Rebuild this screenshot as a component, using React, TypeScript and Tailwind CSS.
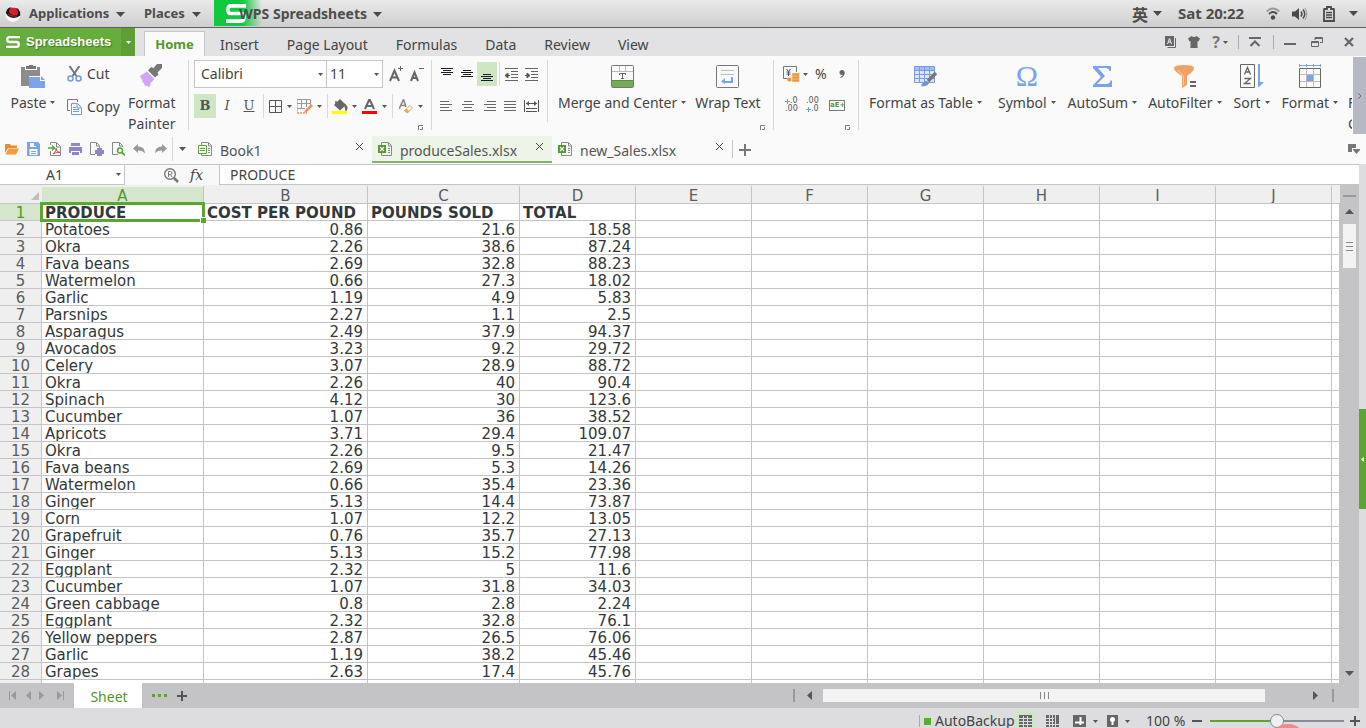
import { useState, type ReactNode } from "react";
import clsx from "clsx";

type Row = [string, string, string, string];

const rows: Row[] = [
  ["Potatoes", "0.86", "21.6", "18.58"],
  ["Okra", "2.26", "38.6", "87.24"],
  ["Fava beans", "2.69", "32.8", "88.23"],
  ["Watermelon", "0.66", "27.3", "18.02"],
  ["Garlic", "1.19", "4.9", "5.83"],
  ["Parsnips", "2.27", "1.1", "2.5"],
  ["Asparagus", "2.49", "37.9", "94.37"],
  ["Avocados", "3.23", "9.2", "29.72"],
  ["Celery", "3.07", "28.9", "88.72"],
  ["Okra", "2.26", "40", "90.4"],
  ["Spinach", "4.12", "30", "123.6"],
  ["Cucumber", "1.07", "36", "38.52"],
  ["Apricots", "3.71", "29.4", "109.07"],
  ["Okra", "2.26", "9.5", "21.47"],
  ["Fava beans", "2.69", "5.3", "14.26"],
  ["Watermelon", "0.66", "35.4", "23.36"],
  ["Ginger", "5.13", "14.4", "73.87"],
  ["Corn", "1.07", "12.2", "13.05"],
  ["Grapefruit", "0.76", "35.7", "27.13"],
  ["Ginger", "5.13", "15.2", "77.98"],
  ["Eggplant", "2.32", "5", "11.6"],
  ["Cucumber", "1.07", "31.8", "34.03"],
  ["Green cabbage", "0.8", "2.8", "2.24"],
  ["Eggplant", "2.32", "32.8", "76.1"],
  ["Yellow peppers", "2.87", "26.5", "76.06"],
  ["Garlic", "1.19", "38.2", "45.46"],
  ["Grapes", "2.63", "17.4", "45.76"],
];

const headings = ["PRODUCE", "COST PER POUND", "POUNDS SOLD", "TOTAL"];
const columns = ["A", "B", "C", "D", "E", "F", "G", "H", "I", "J"];
const colWidths = ["w-[162px]", "w-[164px]", "w-[152px]", "w-[116px]", "w-[116px]", "w-[116px]", "w-[116px]", "w-[116px]", "w-[116px]", "w-[116px]"];
const emptyCols = ["E", "F", "G", "H", "I", "J", "rest"];
const menuTabs = ["Insert", "Page Layout", "Formulas", "Data", "Review", "View"];

/* ---------- small drawing helpers ---------- */

function Svg({ w, h, children, className }: { w: number; h: number; children: ReactNode; className?: string }) {
  return (
    <svg width={w} height={h} viewBox={`0 0 ${w} ${h}`} fill="none" className={clsx("block shrink-0", className)} aria-hidden="true">
      {children}
    </svg>
  );
}

function Caret({ className }: { className?: string }) {
  return (
    <Svg w={5} h={3} className={className}>
      <path d="M0 0h5L2.5 3z" fill="#555" />
    </Svg>
  );
}

function BigCaret() {
  return (
    <Svg w={9} h={5}>
      <path d="M0 0h9L4.5 5z" fill="#4a4a4a" />
    </Svg>
  );
}

function Launcher() {
  return (
    <button aria-label="More options" className="absolute right-2 bottom-1">
      <Svg w={5} h={5}>
        <path d="M.5 5V.5H5M2 4.5h2.5V2" stroke="#777" />
      </Svg>
    </button>
  );
}

function Divider({ className, color = "bg-[#d9d9da]" }: { className?: string; color?: string }) {
  return <div className={clsx("w-px shrink-0", color, className)} />;
}

function WpsLogo({ w, h }: { w: number; h: number }) {
  return (
    <svg width={w} height={h} viewBox="0 0 20 18" preserveAspectRatio="none" fill="none" className="block shrink-0" aria-hidden="true">
      <path d="M20 1.8H5Q1.8 1.8 1.8 5.4Q1.8 9 5 9H15Q18.2 9 18.2 12.6Q18.2 16.2 15 16.2H0" stroke="#fff" strokeWidth="3.4" />
    </svg>
  );
}

// horizontal line stack used by the alignment icons: [x, y, width]
function Lines({ items, color = "#666", w = 14, h = 12, children }: { items: number[][]; color?: string; w?: number; h?: number; children?: ReactNode }) {
  return (
    <Svg w={w} h={h}>
      {items.map(([x, y, len]) => (
        <rect key={`${x}-${y}`} x={x} y={y} width={len} height={1} fill={color} />
      ))}
      {children}
    </Svg>
  );
}

/* ---------- desktop bar ---------- */

function DesktopBar() {
  return (
    <header className="flex h-7 items-center border-b border-[#606062] bg-gradient-to-b from-[#eaeaea] to-[#cecece] text-[13px] font-bold text-[#4d4d4d]">
      <Svg w={16} h={16} className="ml-[5px]">
        <circle cx="8" cy="8" r="7.5" fill="#fff" />
        <path d="M1 8.5C3 12 10 12.500 14.500 9.500C14 13 11 15.500 8 15.500C4 15.500 1 12 1 8.500z" fill="#fff" />
        <path d="M.8 7C1.500 4 3 2 4.500 1.500L13 2.500Q15.500 5 15.300 9.500Q11 13 6 11.500Q2 10 .8 7z" fill="#161616" />
        <path d="M4 5.500Q4.500 1.500 6.300 1.500Q8 2.200 9.300 1.500Q12.500 1.500 13.300 7.800Q12 10 8.500 9Q4.500 8 4 5.500z" fill="#d4202a" />
        <path d="M2.500 6.500Q5 10.300 13.500 9.700Q8 12 3.500 9z" fill="#d4202a" />
      </Svg>
      <button className="ml-2 flex w-24 items-center justify-between pt-px">Applications <BigCaret /></button>
      <button className="ml-[19px] flex w-[57px] items-center justify-between pt-px">Places <BigCaret /></button>
      <button className="relative ml-[13px] flex h-full w-[168px] items-center justify-end gap-[6px] pt-px">
        <span className="absolute top-0 left-0 h-[26px] w-12 bg-gradient-to-r from-[#12c83e] from-60% to-transparent pt-1 pl-3">
          <WpsLogo w={20} h={19} />
        </span>
        <span className="relative text-sm">WPS Spreadsheets</span>
        <BigCaret />
      </button>
      <div className="ml-auto flex items-center pr-2">
        <button className="flex items-center gap-[5px] font-['Noto_Sans_CJK_SC',sans-serif] text-[16px] leading-5">英 <BigCaret /></button>
        <span className="ml-4 w-[74px] text-[15px]">Sat 20:22</span>
        <Svg w={14} h={13} className="ml-[14px]">
          <path d="M.8 4.500Q7-1.500 13.200 4.500" stroke="#9a9a9a" strokeWidth="1.800" />
          <path d="M3 7Q7 3 11 7" stroke="#4a4a4a" strokeWidth="1.800" />
          <circle cx="7" cy="10.500" r="2.200" fill="#4a4a4a" />
        </Svg>
        <Svg w={16} h={14} className="ml-3">
          <path d="M0 4.500h3L7 1v12L3 9.500H0z" fill="#4a4a4a" />
          <path d="M9 4.500q1.800 2.500 0 5M11 2.500q3.500 4.500 0 9" stroke="#4a4a4a" strokeWidth="1.500" />
          <path d="M13 1q3.500 6 0 12" stroke="#aaa" strokeWidth="1.300" />
        </Svg>
        <Svg w={12} h={16} className="ml-[15px]">
          <path d="M4 1h4v2h2.500q.5 0 .5.500v11.500H1V3.500Q1 3 1.500 3H4z" stroke="#4a4a4a" strokeWidth="1.800" />
          <path d="M3 6.500h6M3 9h6M3 11.500h6" stroke="#4a4a4a" strokeWidth="1.400" />
        </Svg>
        <span className="ml-[14px]"><BigCaret /></span>
      </div>
    </header>
  );
}

/* ---------- menu tabs ---------- */

function MenuBar() {
  return (
    <nav className="flex h-7 items-end bg-[#e2e2e4] text-sm text-[#444]">
      <button className="flex h-7 w-[121px] items-center gap-[6px] bg-[#66ad3d] pl-[6px] font-['Liberation_Sans',sans-serif] text-[13px] font-bold text-white [text-shadow:1px_1px_1px_#3c7a1c]">
        <WpsLogo w={14} h={12} />
        Spreadsheets
      </button>
      <button aria-label="Application menu" className="flex h-7 w-[14px] items-center justify-center bg-[#5d9f36]">
        <Svg w={5} h={3}><path d="M0 0h5L2.500 3z" fill="#fff" /></Svg>
      </button>
      <button className="mr-px ml-[9px] h-[25px] w-[61px] border border-b-0 border-[#c6c6c8] bg-[#fafafa] text-[13px] font-bold text-[#4f9a2a]">Home</button>
      {menuTabs.map((tab) => (
        <button key={tab} className="h-[23px] px-[14px] leading-[23px]">{tab}</button>
      ))}
      <div className="ml-auto flex h-7 items-center pr-3">
        <button aria-label="Skin letter" className="mr-3">
          <Svg w={11} h={12}>
            <path d="M2.500 11.500h8V2" stroke="#666" />
            <path d="M0 0h9v10H0z" fill="#666" />
            <path d="M2.500 8 4.500 2.500 6.500 8M3.200 6h2.600" stroke="#eee" />
          </Svg>
        </button>
        <button aria-label="Theme">
          <Svg w={12} h={12}><path d="M3.500 0Q6 2 8.500 0L12 2.500 10.500 5.500 9.500 5v7H2.500V5L1.500 5.500 0 2.500z" fill="#666" /></Svg>
        </button>
        <button aria-label="Help" className="ml-3 flex items-center gap-[3px] text-[16px] leading-5 font-bold text-[#777]">? <Caret /></button>
        <Divider className="ml-[10px] h-[14px]" color="bg-[#aaa]" />
        <button aria-label="Collapse ribbon" className="ml-[10px]">
          <Svg w={12} h={10}><path d="M0 1h12M1.500 9 6 4.500 10.500 9" stroke="#666" strokeWidth="2" /></Svg>
        </button>
        <Divider className="ml-3 h-[14px]" color="bg-[#aaa]" />
        <button aria-label="Minimize" className="ml-[10px]"><Svg w={12} h={10}><path d="M0 7h12" stroke="#666" strokeWidth="2" /></Svg></button>
        <button aria-label="Restore" className="ml-[15px]">
          <Svg w={12} h={10}><path d="M.5 4.500h7v5h-7zM.5 5.500h7M4 3V.500h7.500v5H9M4 1.500h7" stroke="#666" /></Svg>
        </button>
        <button aria-label="Close" className="ml-[21px]"><Svg w={10} h={10}><path d="m1 1 8 8M9 1 1 9" stroke="#666" strokeWidth="2.200" /></Svg></button>
      </div>
    </nav>
  );
}

/* ---------- ribbon ---------- */

function BigButton({ icon, label, caret, className }: { icon: ReactNode; label: ReactNode; caret?: boolean; className?: string }) {
  return (
    <button className={clsx("flex shrink-0 flex-col items-center gap-1 self-start pt-2 leading-[21px] whitespace-nowrap", className)}>
      <span className="flex h-6 items-center">{icon}</span>
      <span className="flex items-center gap-1">{label}{caret && <Caret />}</span>
    </button>
  );
}

function ClipboardGroup() {
  return (
    <div className="flex w-[188px] shrink-0 pl-[10px]">
      <BigButton
        caret
        label="Paste"
        className="w-[46px]"
        icon={
          <Svg w={24} h={23}>
            <path d="M0 2h4v3h12V2h3v9H8v10H0z" fill="#8c8c8c" />
            <path d="M5 1h3V0h4v1h3v3H5z" fill="#777" />
            <path d="M8 12h11v4h5v7H8z" fill="#7ba3ec" />
            <path d="M20 11l4 4h-4z" fill="#7ba3ec" />
          </Svg>
        }
      />
      <div className="ml-[11px] flex w-[56px] flex-col pt-2">
        <button className="flex h-5 items-center gap-[5px]">
          <Svg w={15} h={16}>
            <path d="M2.500 0 9.500 10M12.500 0 5.500 10" stroke="#777" strokeWidth="2" />
            <circle cx="3.500" cy="12.500" r="2.500" stroke="#6f9be8" strokeWidth="1.500" />
            <circle cx="11.500" cy="12.500" r="2.500" stroke="#6f9be8" strokeWidth="1.500" />
          </Svg>
          Cut
        </button>
        <button className="mt-[13px] flex h-5 items-center gap-[5px]">
          <Svg w={15} h={16}>
            <path d="M3 11.500H.5V.500h10V3" stroke="#777" />
            <path d="M4.500 4.500h6l4 4v7h-10z" stroke="#6f9be8" />
            <path d="M10 5v4h4M6 8.500h3M6 10.500h6M6 12.500h6" stroke="#6f9be8" />
          </Svg>
          Copy
        </button>
      </div>
      <BigButton
        label={<span className="text-center">Format<br />Painter</span>}
        className="ml-[5px]"
        icon={
          <Svg w={24} h={24}>
            <path d="M17 0h5v4l-4.500 4.500 1 2-3.500 3L8 6.500l3-3.500 2.500 1z" fill="#777" />
            <path d="M7 7.500 14.500 15 9 21 5.500 22.500 0 12z" fill="#cfa8f5" />
            <path d="M3 16l7 6" stroke="#cfa8f5" strokeWidth="3" />
          </Svg>
        }
      />
    </div>
  );
}

function FontGroup() {
  const [font, setFont] = useState("Calibri");
  const [size, setSize] = useState("11");
  return (
    <div className="relative w-[242px] shrink-0 pt-1 pl-[5px]">
      <div className="flex items-center">
        <label className="relative">
          <span className="sr-only">Font</span>
          <select value={font} onChange={(e) => setFont(e.target.value)} className="block h-7 w-[133px] appearance-none border border-[#c6c6c8] bg-white pl-[6px] leading-5">
            <option>Calibri</option>
            <option>Arial</option>
          </select>
          <Caret className="pointer-events-none absolute top-[13px] right-1" />
        </label>
        <label className="relative">
          <span className="sr-only">Font size</span>
          <select value={size} onChange={(e) => setSize(e.target.value)} className="block h-7 w-14 appearance-none border border-l-0 border-[#c6c6c8] bg-white pl-[3px] leading-5">
            <option>11</option>
            <option>12</option>
          </select>
          <Caret className="pointer-events-none absolute top-[13px] right-1" />
        </label>
        <button aria-label="Increase font size" className="ml-[6px]">
          <Svg w={14} h={16}>
            <path d="M1 15 5.500 4.500 10 15M2.500 11.500h6" stroke="#666" strokeWidth="2" />
            <path d="M9 2.500h5M11.500 0v5" stroke="#666" />
          </Svg>
        </button>
        <button aria-label="Decrease font size" className="ml-[7px]">
          <Svg w={14} h={16}>
            <path d="M1 15 4.500 6.500 8 15M2 12h5" stroke="#666" strokeWidth="2" />
            <path d="M9 2.500h5" stroke="#666" />
          </Svg>
        </button>
      </div>
      <div className="mt-[6px] flex h-6 items-center">
        <button className="h-6 w-[22px] bg-[#cee6c4] font-['DejaVu_Serif',serif] text-[13px] font-bold text-[#555]">B</button>
        <button className="h-6 w-[22px] font-['DejaVu_Serif',serif] text-[13px] text-[#555] italic">I</button>
        <button className="h-6 w-[22px] font-['DejaVu_Serif',serif] text-[13px] text-[#555] underline">U</button>
        <Divider className="ml-[3px] h-6" />
        <button aria-label="Borders" className="ml-[5px] flex items-center gap-[5px]">
          <Svg w={13} h={13}><path d="M.5.500h12v12H.500zM.5 6.500h12M6.500.500v12" stroke="#555" /></Svg>
          <Caret />
        </button>
        <button aria-label="Draw border" className="ml-[5px] flex items-center gap-1">
          <Svg w={16} h={15}>
            <path d="M0 14V.500h13.500V7M0 4.500h13M0 9.500h8M4.500 0v10M9.500 0v8" stroke="#999" />
            <path d="M15 6 8 13" stroke="#f0935a" strokeWidth="2.500" />
            <path d="M0 14h10" stroke="#f0935a" strokeWidth="1.500" strokeDasharray="2 1" />
          </Svg>
          <Caret />
        </button>
        <Divider className="ml-[5px] h-6" />
        <button aria-label="Fill color" className="ml-1 flex items-center gap-1">
          <Svg w={16} h={15}>
            <path d="M8 0 14 6 8 11.500 2 6z" fill="#666" />
            <path d="M4 2v4M13 6q3 2 1 5z" stroke="#666" strokeWidth="1.500" />
            <path d="M0 12h15v3H0z" fill="#ffff00" />
          </Svg>
          <Caret />
        </button>
        <button aria-label="Font color" className="ml-[5px] flex items-center gap-[5px]">
          <Svg w={15} h={15}>
            <path d="M3 10 7.500 0 12 10M4.500 7h6" stroke="#666" strokeWidth="2" />
            <path d="M0 12h15v3H0z" fill="#f00" />
          </Svg>
          <Caret />
        </button>
        <Divider className="ml-[5px] h-6" />
        <button aria-label="Clear format" className="ml-[6px] flex items-center gap-[5px]">
          <Svg w={14} h={15}>
            <path d="M0 10 4.500.500 7 8M2 6.500h4" stroke="#888" strokeWidth="1.600" />
            <path d="M11 6.500 13.500 9 8 14 5.500 11.500z" stroke="#eda45c" />
            <path d="m7.500 9.500 3 3L8 14.500 5.500 12z" fill="#eda45c" />
          </Svg>
          <Caret />
        </button>
      </div>
      <Launcher />
    </div>
  );
}

function AlignGroup() {
  const dark = "#1c1c28";
  return (
    <div className="relative flex w-[341px] shrink-0">
      <div className="w-[115px] pt-[6px] pl-[5px]">
        <div className="flex h-6 items-center">
          <button aria-label="Align top" className="flex h-6 w-5 items-start justify-center pt-[6px]">
            <Lines color={dark} h={9} w={12} items={[[0, 0, 12], [2, 2, 8], [0, 4, 12], [2, 6, 8]]} />
          </button>
          <button aria-label="Align middle" className="flex h-6 w-5 items-center justify-center">
            <Lines color={dark} h={8} w={12} items={[[2, 0, 8], [0, 2, 12], [2, 4, 8], [0, 6, 12]]} />
          </button>
          <button aria-label="Align bottom" className="flex h-6 w-5 items-end justify-center bg-[#cee6c4] pb-1">
            <Lines color={dark} h={8} w={12} items={[[2, 0, 8], [0, 2, 12], [2, 4, 8], [0, 6, 12]]} />
          </button>
          <Divider className="ml-[2px] h-6" />
          <button aria-label="Decrease indent" className="ml-[5px]">
            <Lines w={13} h={13} items={[[0, 0, 13], [6, 3, 7], [6, 6, 7], [6, 9, 7], [0, 12, 13]]}>
              <path d="M0 7.500 3 5v5zM2 7.500h3" fill="#555" stroke="#555" />
            </Lines>
          </button>
          <button aria-label="Increase indent" className="ml-[7px]">
            <Lines w={13} h={13} items={[[0, 0, 13], [6, 3, 7], [6, 6, 7], [6, 9, 7], [0, 12, 13]]}>
              <path d="M5 7.500 2 5v5zM0 7.500h3" fill="#555" stroke="#555" />
            </Lines>
          </button>
        </div>
        <div className="mt-2 flex h-6 items-center gap-2 pl-[3px]">
          <button aria-label="Align left"><Lines w={12} h={11} items={[[0, 0, 9], [0, 3, 12], [0, 6, 9], [0, 9, 12]]} /></button>
          <button aria-label="Center" className="ml-[2px]"><Lines w={12} h={11} items={[[2, 0, 8], [0, 3, 12], [2, 6, 8], [0, 9, 12]]} /></button>
          <button aria-label="Align right" className="ml-[2px]"><Lines w={12} h={11} items={[[3, 0, 9], [0, 3, 12], [3, 6, 9], [0, 9, 12]]} /></button>
          <button aria-label="Justify"><Lines w={12} h={11} items={[[0, 0, 12], [0, 3, 12], [0, 6, 12], [0, 9, 12]]} /></button>
          <button aria-label="Distribute">
            <Svg w={15} h={12}>
              <path d="M.5 0v12M14.500 0v12M2 8.500h11M2 11.500h11M2 3.500h11" stroke="#555" />
              <path d="M2 3.500 5 1v5zM13 3.500 10 1v5z" fill="#555" />
            </Svg>
          </button>
        </div>
      </div>
      <Divider className="mt-1 h-[62px]" />
      <BigButton
        caret
        label="Merge and Center"
        className="ml-[10px]"
        icon={
          <Svg w={23} h={23}>
            <path d="M1 15h21v7H1z" fill="#75ad57" />
            <rect x=".5" y=".5" width="22" height="22" rx="1" stroke="#777" />
            <path d="M1 6.500h21M8.500 1v5M14.500 1v5" stroke="#bbb" />
            <path d="M0 15.500h23" stroke="#5a8f3d" />
            <path d="M8.500 10V8.500h6V10M11.500 8.500v5M10 13.500h3" stroke="#666" />
          </Svg>
        }
      />
      <BigButton
        label="Wrap Text"
        className="ml-[9px]"
        icon={
          <Svg w={23} h={23}>
            <rect x=".5" y=".5" width="22" height="22" rx="1" stroke="#777" />
            <path d="M5 5.500h13M5 9.500h13" stroke="#bbb" />
            <path d="M16 12v5H8" stroke="#7ba3ec" strokeWidth="2" />
            <path d="M5 16.500 9 13v6z" fill="#7ba3ec" />
          </Svg>
        }
      />
      <Launcher />
    </div>
  );
}

function NumberGroup() {
  return (
    <div className="relative w-[84px] shrink-0 pt-2 pl-[9px]">
      <div className="flex h-5 items-center">
        <button aria-label="Currency" className="flex items-center gap-[3px]">
          <Svg w={17} h={16}>
            <path d="M13.500 6V.500H.500v12H4" stroke="#777" />
            <path d="M3.500 3 5.500 5.500 7.500 3M5.500 5.500V10M3.500 6h4M3.500 8h4" stroke="#555" />
            <path d="M4 12h4v3H5zM9.500 7.500h6.500v2H9.500zM9.500 10.500h6.500v2H9.500zM9.500 13.500h6.500v2H9.500z" fill="#f09436" stroke="#f09436" strokeLinejoin="round" strokeWidth=".6" />
          </Svg>
          <Caret />
        </button>
        <button className="ml-[7px] text-sm leading-5">%</button>
        <button aria-label="Comma style" className="ml-3">
          <Svg w={6} h={8}><circle cx="3" cy="2.500" r="2.500" fill="#666" /><path d="M5 2.500Q5 6 1.500 7.500" stroke="#666" strokeWidth="1.300" /></Svg>
        </button>
      </div>
      <div className="mt-3 flex h-[18px] items-center pl-[2px] font-['DejaVu_Sans',sans-serif] text-[8px] leading-2 text-[#555]">
        <button aria-label="Increase decimal" className="w-[21px]">
          <span className="flex items-center justify-between pr-[10px]">
            <Svg w={5} h={5}><path d="M0 2.500h5M2.500 0v5" stroke="#6f9be8" /></Svg>.0
          </span>
          <span className="block text-left">.00</span>
        </button>
        <button aria-label="Decrease decimal" className="w-[23px]">
          <span className="block text-left">.00</span>
          <span className="flex items-center justify-between pr-3">
            <Svg w={5} h={5}><path d="M0 2.500h5M2.500 0v5" stroke="#6f9be8" /></Svg>.0
          </span>
        </button>
        <button className="h-[11px] w-4 border border-[#777] text-center text-[7px] leading-2 font-bold text-[#5a9a35]">aE+</button>
      </div>
      <Launcher />
    </div>
  );
}

function CellsGroup() {
  return (
    <div className="flex min-w-0 flex-1 overflow-hidden pl-[10px]">
      <BigButton
        caret
        label="Format as Table"
        icon={
          <Svg w={23} h={22}>
            <path d="M1 2h19v16H1z" fill="#dbe6fa" />
            <path d="M1 2h19v4H1z" fill="#a5bff0" />
            <path d="M.5 1.500h20v16H.500zM1 5.500h19M1 9.500h19M1 13.500h19M5.500 2v15M10.500 2v15M15.500 2v15" stroke="#7b9be0" />
            <path d="M22 8 14 16" stroke="#777" strokeWidth="3.500" />
            <path d="M7 21q2-5 6-5l2 2q-2 4-8 3z" fill="#6f93dc" />
          </Svg>
        }
      />
      <BigButton
        caret
        label="Symbol"
        className="ml-4"
        icon={<span className="font-['Liberation_Serif',serif] text-[30px] leading-6 text-[#7ba3ec]">Ω</span>}
      />
      <BigButton
        caret
        label="AutoSum"
        className="ml-3"
        icon={<Svg w={19} h={21}><path d="M0 0h18v5h-1.500Q16 2 12 2H5l7 8-8 8h9Q17 18 17.500 14.500H19V21H0v-2l8-8L0 2z" fill="#7ba3ec" /></Svg>}
      />
      <BigButton
        caret
        label="AutoFilter"
        className="ml-[11px]"
        icon={
          <Svg w={22} h={23}>
            <path d="M0 3Q0 0 10 0T20 3Q20 6 13 11v9l-5 3V11Q0 6 0 3z" fill="#f2a063" />
            <path d="M4 5q4 5 5.500 6v9" stroke="#fbd5b6" />
            <path d="M16 17h6M16 21h6" stroke="#666" strokeWidth="2" />
          </Svg>
        }
      />
      <BigButton
        caret
        label="Sort"
        className="ml-3"
        icon={
          <Svg w={24} h={24}>
            <path d="M.5.500h14v23H.500z" stroke="#666" />
            <path d="M4.500 10.500 7.500 3.500l3 7M5.500 8h4M4.500 14.500h6l-6 5h6" stroke="#666" strokeWidth="1.300" />
            <path d="M18 0h2v18h4l-5 5h-1z" fill="#7ba3ec" />
          </Svg>
        }
      />
      <BigButton
        caret
        label="Format"
        className="ml-3"
        icon={
          <Svg w={22} h={24}>
            <path d="M0 1.500h22M.5 0v3M7.500 0v3M14.500 0v3M21.500 0v3" stroke="#7ba3ec" />
            <path d="M7 10h8v7H7z" fill="#7ba3ec" />
            <path d="M1 10.500h20M1 17.500h20M7.500 4v20M14.500 4v20" stroke="#bbb" />
            <path d="M.5 4.500h21v19H.500z" stroke="#666" />
          </Svg>
        }
      />
      {/* next group is cut off by the scroll handle */}
      <button className="ml-[10px] w-1 shrink-0 self-start overflow-hidden pt-9 text-left leading-[21px]">F<br />C</button>
    </div>
  );
}

function Ribbon() {
  return (
    <section className="flex h-[78px] bg-[#fafafa] text-sm text-[#444]">
      <ClipboardGroup />
      <Divider className="my-1" />
      <FontGroup />
      <Divider className="my-1" />
      <AlignGroup />
      <Divider className="my-1" />
      <NumberGroup />
      <Divider className="my-1" />
      <CellsGroup />
      <button aria-label="Scroll ribbon" className="mt-px flex w-[13px] shrink-0 items-center justify-center bg-[#b6b9c3]">
        <Svg w={4} h={6}><path d="m.5.500 2.500 2.500L.500 5.500" stroke="#666" /></Svg>
      </button>
    </section>
  );
}

/* ---------- quick access + document tabs ---------- */

function SheetIcon({ excel }: { excel?: boolean }) {
  return (
    <Svg w={14} h={14}>
      <path d="M3.500 3V.500h7l3 3v10h-10V11M10.500 1v3h3M10 6.500h2M10 8.500h2M10 10.500h2" stroke="#888" />
      {excel ? (
        <>
          <path d="M0 3h8v8H0z" fill="#4f9a2a" />
          <path d="m2 5 4 4M6 5 2 9" stroke="#fff" strokeWidth="1.200" />
        </>
      ) : (
        <path d="M.5 3.500h8v8h-8zM2 6.500h5M2 8.500h5" stroke="#5aa635" fill="#fff" />
      )}
    </Svg>
  );
}

function DocTab({ name, active, excel }: { name: string; active?: boolean; excel?: boolean }) {
  return (
    <div className={clsx("mb-px flex h-[27px] w-[180px] shrink-0 items-center self-end border-b-2 pr-2 pl-[6px]", active ? "border-[#86b06c] bg-[#ecf5e8]" : "border-transparent")}>
      <button className="flex items-center gap-2">
        <SheetIcon excel={excel} />
        <span className="pt-1">{name}</span>
      </button>
      <button aria-label={`Close ${name}`} className="mb-1 ml-auto">
        <Svg w={9} h={9}><path d="m1 1 7 7M8 1 1 8" stroke="#444" /></Svg>
      </button>
    </div>
  );
}

function DocBar() {
  return (
    <section className="flex h-[30px] items-center bg-[#fafafa] text-sm text-[#555]">
      <div className="flex w-[172px] shrink-0 items-center gap-2 pl-[5px]">
        <button aria-label="Open">
          <Svg w={14} h={12}>
            <path d="M0 10V1h5l1 1.500h6V5H3z" fill="#ef8a2c" />
            <path d="M3.500 5.500H14L11 11.500H.500z" fill="#f79a3c" />
          </Svg>
        </button>
        <button aria-label="Save">
          <Svg w={13} h={14}>
            <path d="M0 0h11l2 2v12H0z" fill="#7ba3ec" />
            <path d="M3 1h6v4H3zM2.500 7h8v6h-8z" fill="#fafafa" />
            <path d="M7 1h2v3H7zM4 9h5v1H4zM4 11h5v1H4z" fill="#7ba3ec" />
          </Svg>
        </button>
        <button aria-label="Export to PDF">
          <Svg w={13} h={14}>
            <path d="M2.500 3V.500h6l4 4v9h-10V9M8.500 1v4h4" stroke="#888" />
            <path d="M0 6h6M4 3.500 6.500 6 4 8.500" stroke="#5aa635" strokeWidth="1.500" />
            <path d="M5 12q4-3 3-6 0 4 4 4.500-4-.5-7 1.500" stroke="#dc4a4a" />
          </Svg>
        </button>
        <button aria-label="Print">
          <Svg w={13} h={13}>
            <path d="M2 0h9v3H2zM0 4h13v6h-2V8H2v2H0zM3 9h7v3H3z" fill="#8d86cc" />
          </Svg>
        </button>
        <button aria-label="Print preview">
          <Svg w={14} h={14}>
            <path d="M5 12.500H.500V.500h6l3 3V6M6.500 1v3h3" stroke="#888" />
            <path d="M5 8h9v4H5zM7 6h5v2H7zM7 12h5v2H7z" fill="#8d86cc" />
          </Svg>
        </button>
        <button aria-label="Find">
          <Svg w={13} h={14}>
            <path d="M6 12.500H.500V.500h7l3 3V5M7.500 1v3h3" stroke="#888" />
            <circle cx="8" cy="8.500" r="2.500" stroke="#5aa635" strokeWidth="1.500" />
            <path d="m10 10.500 3 3" stroke="#5aa635" strokeWidth="1.800" />
          </Svg>
        </button>
        <button aria-label="Undo">
          <Svg w={13} h={10}><path d="M5 0v2.500q7 0 7 7Q10 6.500 5 6.500V9L0 4.500z" fill="#999" /></Svg>
        </button>
        <button aria-label="Redo">
          <Svg w={13} h={10}><path d="M8 0v2.500q-7 0-7 7Q3 6.500 8 6.500V9l5-4.500z" fill="#999" /></Svg>
        </button>
      </div>
      <Divider className="h-6" />
      <button aria-label="Customize toolbar" className="flex w-[19px] justify-center"><Svg w={7} h={4}><path d="M0 0h7L3.500 4z" fill="#555" /></Svg></button>
      <DocTab name="Book1" />
      <DocTab name="produceSales.xlsx" active excel />
      <DocTab name="new_Sales.xlsx" excel />
      <Divider className="h-[18px]" color="bg-[#c6c6c8]" />
      <button aria-label="New tab" className="ml-[6px] pt-px"><Svg w={12} h={12}><path d="M0 6h12M6 0v12" stroke="#777" strokeWidth="2" /></Svg></button>
      <button aria-label="Tab list" className="mr-[6px] ml-auto">
        <Svg w={12} h={10}><path d="M0 0h8v4H4v4H0zM5 5h7v1L8.500 10 5 6z" fill="#777" /></Svg>
      </button>
    </section>
  );
}

function FormulaBar() {
  return (
    <section className="flex h-[21px] border-t border-[#c4c4c6] bg-gradient-to-r from-[#fafafa] to-[#ededed] text-sm text-[#444]">
      <label className="relative flex">
        <span className="sr-only">Name box</span>
        <input defaultValue="A1" className="w-[125px] border-r border-b border-[#c4c4c6] bg-white pr-[15px] text-center outline-none" />
        <Caret className="absolute top-2 right-1" />
      </label>
      <button aria-label="Zoom to cell" className="ml-[39px]">
        <Svg w={15} h={15}>
          <circle cx="6" cy="6" r="5.300" stroke="#777" strokeWidth="1.400" />
          <path d="M4.500 9V3.500h2q1.500.3 1.500 1.500T6.500 6.500h-2M6.500 6.500 8 9" stroke="#777" />
          <path d="m10 10 4 4" stroke="#777" strokeWidth="2.500" />
        </Svg>
      </button>
      <button className="ml-[11px] w-[29px] text-left font-['DejaVu_Serif',serif] text-[14px] leading-5 italic">fx</button>
      <label className="flex flex-1">
        <span className="sr-only">Formula</span>
        <input defaultValue="PRODUCE" className="w-full border-b border-l border-[#c4c4c6] bg-white pl-[10px] outline-none" />
      </label>
    </section>
  );
}

/* ---------- grid ---------- */

function Cell({ value, numeric, bold }: { value?: string; numeric?: boolean; bold?: boolean }) {
  return (
    <td className="border-r border-b border-[#c4c4c6] p-0">
      <div className={clsx("h-4 overflow-hidden pr-1 pl-[3px] leading-[19px] whitespace-nowrap", numeric && "text-right", bold && "font-bold")}>{value}</div>
    </td>
  );
}

function Grid() {
  return (
    <div className="relative min-w-0 flex-1 overflow-hidden bg-white">
      <table className="w-full table-fixed border-separate border-spacing-0 font-['DejaVu_Sans',sans-serif] text-[15px] text-[#33383a]">
        <colgroup>
          <col className="w-[42px]" />
          {columns.map((c, i) => <col key={c} className={colWidths[i]} />)}
          <col />
        </colgroup>
        <thead>
          <tr className="bg-[#efefef] text-[#5c5c5c]">
            <th className="h-[19px] border-b border-[#c4c4c6] p-0">
              <Svg w={8} h={8} className="mt-1 mr-[3px] ml-auto"><path d="M8 0v8H0z" fill="#bdbdbf" /></Svg>
            </th>
            {columns.map((c) => (
              <th key={c} scope="col" className={clsx("h-[19px] border-t-2 border-r border-b border-t-[#efefef] border-r-[#c4c4c6] border-b-[#c4c4c6] p-0 font-normal", c === "A" && "bg-[#d5e6cd] text-[#4f9a2a]")}>
                <div className="h-4 overflow-hidden leading-[19px]">{c}</div>
              </th>
            ))}
            <th className="border-b border-[#c4c4c6] p-0" />
          </tr>
        </thead>
        <tbody>
          {[headings, ...rows].map((row, r) => (
            <tr key={r}>
              <th scope="row" className={clsx("border-r border-b border-[#c4c4c6] p-0 font-normal", r === 0 ? "bg-[#d5e6cd] text-[#4f9a2a]" : "bg-[#efefef] text-[#5c5c5c]")}>
                <div className="h-4 overflow-hidden leading-[19px]">{r + 1}</div>
              </th>
              {row.map((value, i) => (
                <Cell key={i} value={value} bold={r === 0} numeric={r > 0 && i > 0} />
              ))}
              {emptyCols.map((c) => <Cell key={c} />)}
            </tr>
          ))}
          {/* sliver of the next row */}
          <tr>
            <th className="border-r border-[#c4c4c6] bg-[#efefef] p-0"><div className="h-4" /></th>
            {[...headings, ...emptyCols].map((c) => <Cell key={c} />)}
          </tr>
        </tbody>
      </table>
      {/* selection frame over A1 */}
      <div className="pointer-events-none absolute top-[17px] left-10 h-5 w-[165px] border-[3px] border-[#5aa631]">
        <span className="absolute -right-[4px] -bottom-[4px] size-[6px] border-t border-l border-white bg-[#5aa631]" />
      </div>
    </div>
  );
}

function VerticalScroll() {
  return (
    <div className="flex w-[19px] shrink-0 flex-col items-center bg-[#c4c4c6]">
      <span className="mt-[10px] h-[2px] w-[13px] bg-[#999]" />
      <button aria-label="Scroll up" className="mt-3"><Svg w={9} h={5}><path d="M4.500 0 9 5H0z" fill="#555" /></Svg></button>
      <div className="mt-[10px] flex h-11 w-[13px] flex-col items-center justify-center gap-[3px] bg-[#f3f3f3]">
        <span className="h-px w-[7px] bg-[#888]" />
        <span className="h-px w-[7px] bg-[#888]" />
        <span className="h-px w-[7px] bg-[#888]" />
      </div>
      <button aria-label="Scroll down" className="mt-auto mb-[7px]"><Svg w={9} h={5}><path d="M0 0h9L4.500 5z" fill="#555" /></Svg></button>
    </div>
  );
}

function SheetBar() {
  return (
    <div className="flex h-[25px] shrink-0 items-center bg-[#c4c4c6]">
      <div className="flex w-[74px] shrink-0 items-center pl-[9px]">
        <button aria-label="First sheet"><Svg w={7} h={9}><path d="M0 0h1v9H0zM7 0v9L2 4.500z" fill="#999" /></Svg></button>
        <button aria-label="Previous sheet" className="ml-[10px]"><Svg w={5} h={9}><path d="M5 0v9L0 4.500z" fill="#999" /></Svg></button>
        <button aria-label="Next sheet" className="ml-2"><Svg w={5} h={9}><path d="M0 0v9l5-4.500z" fill="#999" /></Svg></button>
        <button aria-label="Last sheet" className="ml-[13px]"><Svg w={7} h={9}><path d="M6 0h1v9H6zM0 0v9l5-4.500z" fill="#999" /></Svg></button>
      </div>
      <button className="h-full w-[68px] bg-white pt-[3px] pl-[2px] text-sm text-[#4f9a2a]">Sheet</button>
      <button aria-label="All sheets" className="ml-[10px]"><Svg w={15} h={3}><path d="M0 0h3v3H0zM6 0h3v3H6zM12 0h3v3h-3z" fill="#5aa631" /></Svg></button>
      <button aria-label="Add sheet" className="ml-[10px]"><Svg w={10} h={10}><path d="M0 5h10M5 0v10" stroke="#555" strokeWidth="2" /></Svg></button>
      <div className="ml-auto flex w-[566px] items-center">
        <span className="h-[13px] w-[2px] bg-[#999]" />
        <button aria-label="Scroll left" className="ml-3"><Svg w={5} h={9}><path d="M5 0v9L0 4.500z" fill="#555" /></Svg></button>
        <div className="ml-[11px] flex h-[13px] w-[442px] items-center justify-center gap-[3px] bg-[#f3f3f3]">
          <span className="h-[7px] w-px bg-[#888]" />
          <span className="h-[7px] w-px bg-[#888]" />
          <span className="h-[7px] w-px bg-[#888]" />
        </div>
        <button aria-label="Scroll right" className="ml-12"><Svg w={5} h={9}><path d="M0 0v9l5-4.500z" fill="#555" /></Svg></button>
        <span className="ml-[14px] h-[13px] w-[2px] bg-[#999]" />
      </div>
    </div>
  );
}

/* ---------- status bar ---------- */

function StatusBar() {
  const [zoom, setZoom] = useState(100);
  return (
    <footer className="relative flex h-5 shrink-0 items-center justify-end overflow-hidden bg-[#dddddf] pt-[6px] pr-[6px] text-sm text-[#444]">
      <Divider className="h-3" color="bg-[#aaa]" />
      <span className="ml-1 size-[7px] bg-[#55b030]" />
      <span className="ml-1 w-20">AutoBackup</span>
      <button aria-label="Normal view" className="flex h-5 w-[21px] shrink-0 items-center justify-center bg-[#cee6c4]">
        <Svg w={13} h={12}>
          <path d="M0 0h13v12H0z" fill="#666" />
          <path d="M0 3.500h13M0 6.500h13M0 9.500h13M4.500 1v11M8.500 1v11" stroke="#dde" />
        </Svg>
      </button>
      <button aria-label="Page break view" className="ml-[10px]">
        <Svg w={13} h={12}>
          <path d="M0 0h13v12H0z" fill="#666" />
          <path d="M0 3.500h8M0 6.500h8M0 9.500h13M3.500 0v12M6.500 0v12M9.500 0v12" stroke="#dddddf" />
        </Svg>
      </button>
      <button aria-label="Freeze panes" className="ml-[14px] flex items-center gap-[7px]">
        <Svg w={13} h={12}>
          <path d="M0 0h13v12H0z" fill="#666" />
          <path d="M2 7.500h9M7.500 2v8" stroke="#fff" strokeWidth="2" />
        </Svg>
        <Caret />
      </button>
      <button aria-label="Reading mode" className="ml-[9px] flex items-center gap-[7px]">
        <Svg w={11} h={12}>
          <path d="M0 0h11v12H0z" fill="#666" />
          <circle cx="5.500" cy="4.500" r="2.500" fill="#fff" />
          <path d="M4.500 6h2v4h-2z" fill="#fff" />
        </Svg>
        <Caret />
      </button>
      <span className="ml-4 w-[46px]">{zoom} %</span>
      <button aria-label="Zoom out" onClick={() => setZoom(Math.max(10, zoom - 10))}>
        <Svg w={10} h={10}><path d="M0 5h10" stroke="#555" strokeWidth="2" /></Svg>
      </button>
      <label className="mr-[6px] ml-2 flex">
        <span className="sr-only">Zoom</span>
        <input
          type="range"
          min={0}
          max={200}
          value={zoom}
          onChange={(e) => setZoom(Number(e.target.value))}
          className="h-[14px] w-[134px] appearance-none bg-[linear-gradient(to_right,#5aa631_50%,#8c8c94_50%)] bg-[length:100%_2px] bg-center bg-no-repeat [&::-webkit-slider-thumb]:size-[14px] [&::-webkit-slider-thumb]:appearance-none [&::-webkit-slider-thumb]:rounded-full [&::-webkit-slider-thumb]:border [&::-webkit-slider-thumb]:border-[#888] [&::-webkit-slider-thumb]:bg-[#f0f0f0]"
        />
      </label>
      <button aria-label="Zoom in" onClick={() => setZoom(Math.min(200, zoom + 10))}>
        <Svg w={10} h={10}><path d="M0 5h10M5 0v10" stroke="#555" strokeWidth="2" /></Svg>
      </button>
      <span className="pointer-events-none absolute right-[60px] -bottom-[32px] size-9 rounded-full bg-[#ee8c88]" />
    </footer>
  );
}

export default function App() {
  return (
    <div className="flex h-screen flex-col overflow-hidden bg-[#dddddf] font-['Noto_Sans',sans-serif]">
      <DesktopBar />
      <MenuBar />
      <Ribbon />
      <DocBar />
      <main className="flex min-h-0 flex-1">
        <div className="flex min-w-0 flex-1 flex-col">
          <FormulaBar />
          <div className="flex min-h-0 flex-1">
            <Grid />
            <VerticalScroll />
          </div>
          <SheetBar />
        </div>
        <aside className="flex w-[7px] shrink-0 flex-col bg-[#dddddf]">
          <button aria-label="Show side panel" className="mt-[245px] flex h-[100px] w-[7px] items-center justify-center bg-[#5aa631]">
            <Svg w={3} h={5}><path d="M3 0v5L0 2.500z" fill="#fff" /></Svg>
          </button>
        </aside>
      </main>
      <StatusBar />
    </div>
  );
}
